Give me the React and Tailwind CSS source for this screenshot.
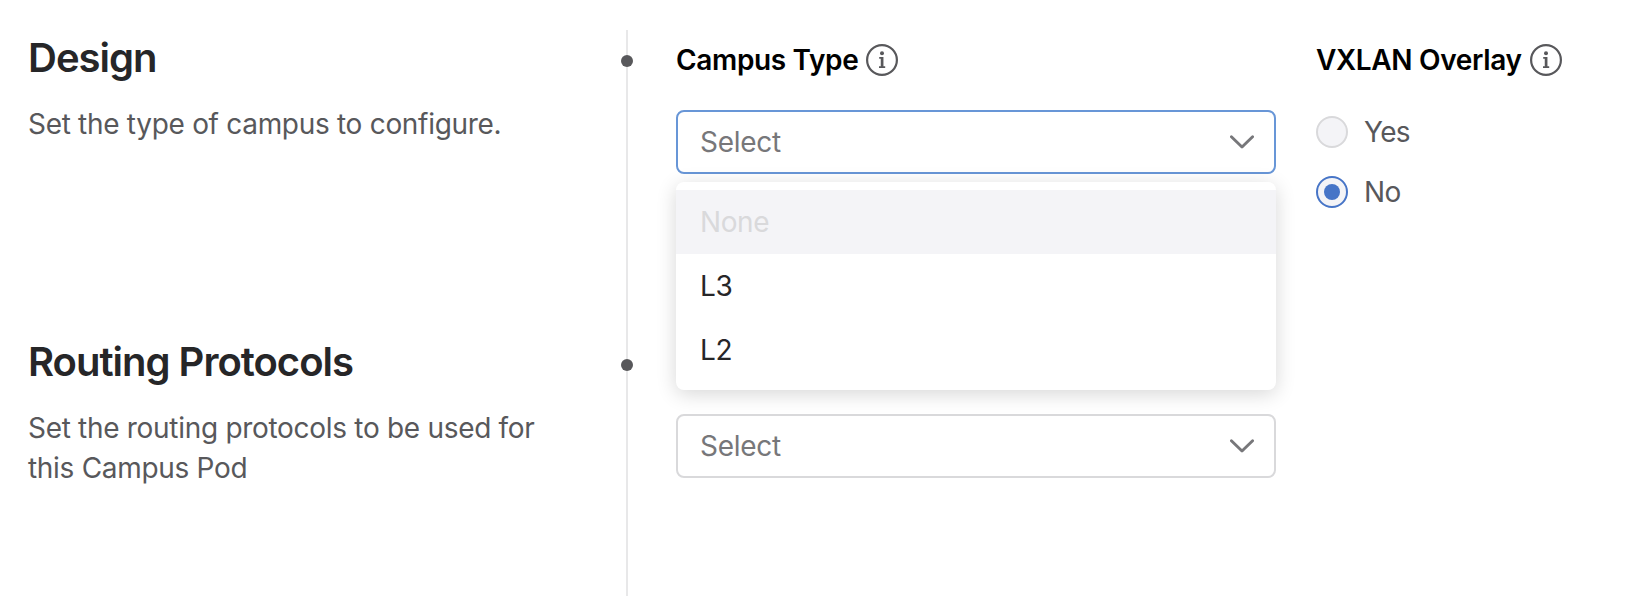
function InfoIcon() {
  return (
    <svg className="ml-2 size-8 shrink-0 text-[#58585b]" viewBox="0 0 32 32" fill="none" aria-hidden="true">
      <circle cx="16" cy="16" r="14.9" stroke="currentColor" strokeWidth="2.2" />
      <circle cx="16" cy="9.2" r="2" fill="currentColor" />
      <path d="M13.2 13.9h2.2M13 23.2h6.2" stroke="currentColor" strokeWidth="1.7" />
      <path d="M16.1 13v10.6" stroke="currentColor" strokeWidth="2.7" />
    </svg>
  );
}

function Chevron() {
  return (
    <svg className="h-[14px] w-6 text-[#77777a]" viewBox="0 0 24 14" fill="none" aria-hidden="true">
      <path d="M1.4 1.7 12 12 22.6 1.7" stroke="currentColor" strokeWidth="2.9" strokeLinecap="round" strokeLinejoin="round" />
    </svg>
  );
}

function Label({ children }) {
  return (
    <div className="flex h-8 items-center text-[28px] font-semibold tracking-[-0.34px] text-black">
      <span>{children}</span>
      <InfoIcon />
    </div>
  );
}

function Select({ active = false }) {
  return (
    <div
      className={`flex h-16 w-[600px] items-center justify-between rounded-lg border-2 bg-white pr-5 pl-[22px] text-[28px] tracking-[-0.3px] text-[#77777a] ${
        active ? "border-[#6896d7]" : "border-[#d9d9db]"
      }`}
    >
      <span>Select</span>
      <Chevron />
    </div>
  );
}

function Radio({ label, checked = false }) {
  return (
    <div className="flex h-8 items-center gap-4 text-[28px] tracking-[-0.7px] text-[#58585b]">
      <span
        className={`flex size-8 items-center justify-center rounded-full border-2 bg-[#f4f4f7] ${
          checked ? "border-[#4775c7]" : "border-[#d9d9db]"
        }`}
      >
        {checked && <span className="size-4 rounded-full bg-[#4775c7]" />}
      </span>
      <span>{label}</span>
    </div>
  );
}

function Section({ title, description, children }) {
  return (
    <section className="flex h-[304px]">
      <div className="w-[626px] shrink-0 pt-1 pl-7">
        <h2 className="text-[40px] leading-[48px] font-semibold tracking-[-1px] text-[#262628]">{title}</h2>
        <p className="mt-[22px] w-[540px] text-[28px] leading-10 tracking-[-0.3px] text-[#58585b]">{description}</p>
      </div>
      <div className="w-[2px] shrink-0 bg-[#e8e8e9]">
        <span className="mt-[25px] -ml-[5px] block size-[12px] rounded-full bg-[#58585b]" />
      </div>
      <div className="flex pl-12">{children}</div>
    </section>
  );
}

export default function App() {
  return (
    <main className="h-[596px] w-[1642px] overflow-hidden bg-white pt-[30px] font-['Inter',sans-serif]">
      <Section title="Design" description="Set the type of campus to configure.">
        <div className="relative pt-[14px]">
          <Label>Campus Type</Label>
          <div className="mt-[34px]">
            <Select active />
          </div>
          <ul className="absolute top-[152px] left-0 z-10 w-[600px] rounded-lg bg-white py-2 text-[28px] tracking-[-0.4px] text-[#262628] shadow-[0_4px_20px_rgba(0,0,0,0.16)]">
            <li className="flex h-16 items-center bg-[#f4f4f7] px-6 text-[#d9d9db]">None</li>
            <li className="flex h-16 items-center px-6">L3</li>
            <li className="flex h-16 items-center px-6">L2</li>
          </ul>
        </div>
        <div className="ml-10 pt-[14px]">
          <Label>VXLAN Overlay</Label>
          <div className="mt-10 flex flex-col gap-7">
            <Radio label="Yes" />
            <Radio label="No" checked />
          </div>
        </div>
      </Section>
      <Section title="Routing Protocols" description="Set the routing protocols to be used for this Campus Pod">
        <div className="pt-20">
          <Select />
        </div>
      </Section>
    </main>
  );
}
